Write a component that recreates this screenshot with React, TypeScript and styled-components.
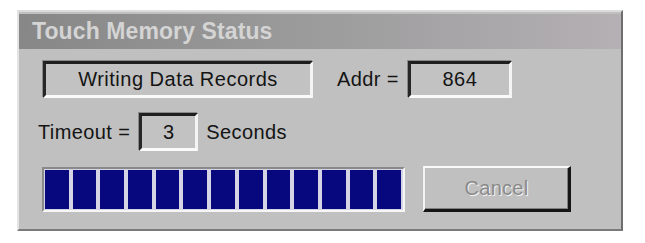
import React from 'react';
import styled, { createGlobalStyle } from 'styled-components';

const GlobalStyle = createGlobalStyle`
  html, body {
    margin: 0;
    padding: 0;
    background: #ffffff;
  }
  body {
    font-family: 'Liberation Sans', Arial, sans-serif;
  }
`;

const Page = styled.div`
  width: 645px;
  height: 243px;
  padding: 10px 0 0 17px;
  box-sizing: border-box;
`;

const Window = styled.div`
  width: 606px;
  height: 221px;
  box-sizing: border-box;
  background: #c0c0c0;
  border-top: 2px solid #dcdcdc;
  border-left: 2px solid #e4e4e4;
  border-right: 2px solid #6e6e6e;
  border-bottom: 2px solid #7a7a7a;
  display: flex;
  flex-direction: column;
`;

const TitleBar = styled.div`
  height: 35px;
  margin: 2px 0 0 0;
  padding-left: 13px;
  display: flex;
  align-items: center;
  background: linear-gradient(to right, #878787 0%, #9a9a9a 45%, #b4b0b4 100%);
  color: #d4d4d4;
  font-weight: bold;
  font-size: 23px;
  letter-spacing: 0.1px;
`;

const Body = styled.div`
  flex: 1;
  padding: 12px 0 0 19px;
  display: flex;
  flex-direction: column;
  gap: 15px;
`;

const Row = styled.div<{ $indent?: number; $height: number }>`
  display: flex;
  align-items: center;
  height: ${({ $height }) => $height}px;
  padding-left: ${({ $indent = 0 }) => $indent}px;
`;

const Label = styled.span<{ $gap?: number }>`
  font-size: 20px;
  letter-spacing: 0.4px;
  color: #141414;
  margin-left: ${({ $gap = 0 }) => $gap}px;
  margin-right: 9px;
  white-space: nowrap;
`;

const Field = styled.div<{ $width: number }>`
  width: ${({ $width }) => $width}px;
  height: 100%;
  box-sizing: border-box;
  display: flex;
  align-items: center;
  justify-content: center;
  background: #c2c2c2;
  border-top: 3px solid #1e1e1e;
  border-left: 3px solid #262626;
  border-bottom: 3px solid #fafafa;
  border-right: 3px solid #f4f4f4;
  box-shadow: -1px -1px 0 #8a8a8a;
  font-size: 20px;
  letter-spacing: 0.5px;
  color: #141414;
  white-space: nowrap;
`;

const Progress = styled.div`
  width: 363px;
  height: 45px;
  box-sizing: border-box;
  border-top: 2px solid #8a8a8a;
  border-left: 2px solid #8a8a8a;
  border-bottom: 2px solid #f6f6f6;
  border-right: 2px solid #f6f6f6;
  padding: 1px 2px 1px 1px;
  background: #d4d4e4;
  display: flex;
  gap: 4px;
`;

const Block = styled.div`
  flex: 1;
  background: #08087e;
`;

const Button = styled.div`
  width: 148px;
  height: 46px;
  margin-left: 18px;
  box-sizing: border-box;
  display: flex;
  align-items: center;
  justify-content: center;
  background: #c0c0c0;
  border-top: 2px solid #fafafa;
  border-left: 2px solid #f2f2f2;
  border-right: 3px solid #151515;
  border-bottom: 3px solid #151515;
  box-shadow: inset -1px -1px 0 #808080;
  font-size: 20px;
  letter-spacing: 0.3px;
  color: #8a8a8a;
  text-shadow: 1px 1px 0 #f4f4f4;
`;

const blocks = Array.from({ length: 13 });

export default function App() {
  return (
    <>
      <GlobalStyle />
      <Page>
        <Window>
          <TitleBar>Touch Memory Status</TitleBar>
          <Body>
            <Row $indent={5} $height={37}>
              <Field $width={270}>Writing Data Records</Field>
              <Label $gap={24}>Addr =</Label>
              <Field $width={104}>864</Field>
            </Row>
            <Row $height={38}>
              <Label>Timeout =</Label>
              <Field $width={59}>3</Field>
              <Label $gap={8}>Seconds</Label>
            </Row>
            <Row $indent={4} $height={46}>
              <Progress>
                {blocks.map((_, i) => (
                  <Block key={i} />
                ))}
              </Progress>
              <Button>Cancel</Button>
            </Row>
          </Body>
        </Window>
      </Page>
    </>
  );
}
